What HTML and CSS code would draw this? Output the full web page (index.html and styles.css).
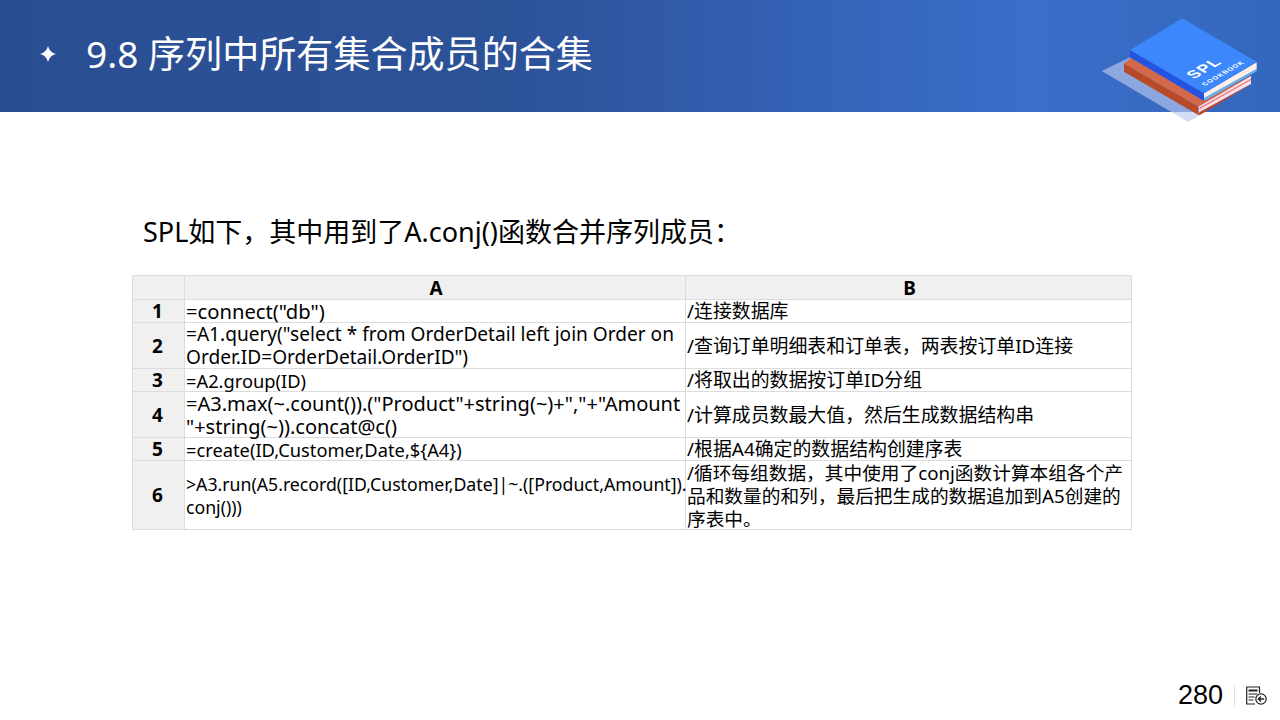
FILE: index.html
```html
<!DOCTYPE html>
<html lang="zh">
<head>
<meta charset="utf-8">
<title>9.8 序列中所有集合成员的合集</title>
<link rel="stylesheet" href="styles.css">
</head>
<body>
<div class="slide">
  <header class="banner">
    <svg class="bullet" viewBox="0 0 16 16" aria-hidden="true"><path d="M8 0Q9.600 6.400 16 8Q9.600 9.600 8 16Q6.400 9.600 0 8Q6.400 6.400 8 0Z" fill="#fff"/></svg>
    <h1 class="title">9.8 序列中所有集合成员的合集</h1>
    <svg class="book" viewBox="0 0 600 390" aria-hidden="true">
      <polygon points="65,213 150,172 360,345 325,366" fill="#becaf0" fill-opacity=".64"/>
      <polygon points="132,190 355,320 355,345 132,215" fill="#b84a2a"/>
      <polygon points="150,178 132,190 355,320 515,228 515,226 372,300 150,172" fill="#d2694a"/>
      <polygon points="355,320 513,228 513,252 357,338" fill="#fbdfe4"/>
      <polygon points="355,338 518,250 360,345 355,345" fill="#b84a2a"/>
      <polygon points="358,323 513,236 513,240 358,328" fill="#e8707c"/>
      <polygon points="150,150 372,280 372,303 150,172" fill="#2453e0"/>
      <polygon points="372,280 530,187 530,207 372,295" fill="#fdeee8"/>
      <polygon points="372,295 530,207 530,214 372,303" fill="#66b4f0"/>
      <polygon points="307,55 530,185 372,280 150,150" fill="#3b87fb"/>
      <text class="book-spl" transform="matrix(.86,-.5,.86,.5,342,238)">SPL</text>
      <text class="book-sub" transform="matrix(.86,-.5,.86,.5,375,258)">COOKBOOK</text>
    </svg>
  </header>

  <main class="content">
    <p class="lead">SPL如下，其中用到了A.conj()函数合并序列成员：</p>
    <table class="grid">
      <colgroup>
        <col class="col-label"><col class="col-a"><col class="col-b">
      </colgroup>
      <tr class="head"><th></th><th>A</th><th>B</th></tr>
      <tr class="h23"><th>1</th><td class="fs202">=connect("db")</td><td>/连接数据库</td></tr>
      <tr class="h46"><th>2</th><td class="fs19">=A1.query("select * from OrderDetail left join Order on<br>Order.ID=OrderDetail.OrderID")</td><td>/查询订单明细表和订单表，两表按订单ID连接</td></tr>
      <tr class="h23"><th>3</th><td class="fs18">=A2.group(ID)</td><td>/将取出的数据按订单ID分组</td></tr>
      <tr class="h46"><th>4</th><td class="fs20">=A3.max(~.count()).("Product"+string(~)+","+"Amount<br>"+string(~)).concat@c()</td><td>/计算成员数最大值，然后生成数据结构串</td></tr>
      <tr class="h23"><th>5</th><td class="fs18">=create(ID,Customer,Date,${A4})</td><td>/根据A4确定的数据结构创建序表</td></tr>
      <tr class="h69"><th>6</th><td class="fs17">&gt;A3.run(A5.record([ID,Customer,Date]|~.([Product,Amount]).<br>conj()))</td><td class="fs187">/循环每组数据，其中使用了conj函数计算本组各个产<br>品和数量的和列，最后把生成的数据追加到A5创建的<br>序表中。</td></tr>
    </table>
  </main>

  <footer class="foot">
    <span class="page">280</span>
    <span class="sep"></span>
    <svg class="back" viewBox="0 0 21 19" aria-hidden="true">
      <path d="M13.500 7V1H.7v17H9" fill="none" stroke="#222" stroke-width="1.200"/>
      <path d="M2.500 4.500h9" stroke="#222" stroke-width="2"/>
      <path d="M2.500 8h9M2.500 11h6M2.500 14h5" stroke="#222" stroke-width="1.200"/>
      <circle cx="15" cy="13" r="5.200" fill="#fff" stroke="#222" stroke-width="1.200"/>
      <path d="M18.200 13h-6M15 10.500L12.300 13l2.700 2.500" fill="none" stroke="#222" stroke-width="1.400"/>
    </svg>
  </footer>
</div>
</body>
</html>
```
FILE: styles.css
```css
* { box-sizing: border-box; }
html, body { margin: 0; padding: 0; background: #fff; }
body { font-family: "Noto Sans", "Noto Sans CJK SC", sans-serif; color: #000; }

.slide {
  width: 1280px;
  height: 720px;
  display: flex;
  flex-direction: column;
  overflow: hidden;
  background: #fff;
}

.banner {
  position: relative;
  flex: none;
  height: 112px;
  display: flex;
  align-items: center;
  padding: 0 0 4px 40px;
  color: #fff;
  background: linear-gradient(90deg, #2a4e92 0%, #2c5298 40%, #3a6ecb 80%, #3467bb 100%);
}
.bullet { flex: none; width: 16px; height: 16px; margin-right: 30px; }
.title {
  margin: 0;
  font-size: 37.100px;
  font-weight: 400;
  line-height: 1.2;
  white-space: nowrap;
}
.book {
  position: absolute;
  left: 1080px;
  top: 0;
  width: 200px;
  height: 130px;
  overflow: visible;
}
.book-spl { font: 700 46px "Liberation Sans", sans-serif; fill: #fff; letter-spacing: 4px; }
.book-sub { font: 700 20px "Liberation Sans", sans-serif; fill: #fff; letter-spacing: 2.500px; }

.content {
  flex: 1;
  padding: 100px 0 0 132px;
}
.lead {
  margin: 0 0 23px 11px;
  font-size: 27px;
  line-height: 40px;
  white-space: nowrap;
}
.grid {
  width: 1000px;
  table-layout: fixed;
  border-collapse: separate;
  border-spacing: 0;
  border-top: 1px solid #dcdcdc;
  border-left: 1px solid #dcdcdc;
  font-size: 18.900px;
  line-height: 23px;
}
.col-label { width: 52px; }
.col-a { width: 501px; }
.col-b { width: 446px; }
.grid th, .grid td {
  padding: 0 0 0 1px;
  font-weight: 400;
  white-space: nowrap;
  box-shadow: inset -1px -1px 0 #dcdcdc;
}
.grid th {
  background: #f0f0f0;
  font-weight: 700;
  text-align: center;
  font-size: 19px;
}
.grid th:first-child { padding: 0 3px 0 0; }
.grid .fs202 { font-size: 20.200px; }
.grid .fs20 { font-size: 20px; }
.grid .fs19 { font-size: 19.100px; }
.grid .fs18 { font-size: 18.300px; }
.grid .fs17 { font-size: 17.700px; }
.grid .fs187 { font-size: 18.700px; }
.head { height: 24px; }
.h23 { height: 23px; }
.h46 { height: 46px; }
.h69 { height: 69px; }

.foot {
  flex: none;
  height: 48px;
  display: flex;
  align-items: center;
  justify-content: flex-end;
  padding: 0 13px 1px 0;
  gap: 11px;
}
.page { font: 27px/1 "Liberation Sans", sans-serif; }
.sep { width: 1px; height: 20px; background: #d6e0f0; }
.back { width: 21px; height: 19px; }
```
